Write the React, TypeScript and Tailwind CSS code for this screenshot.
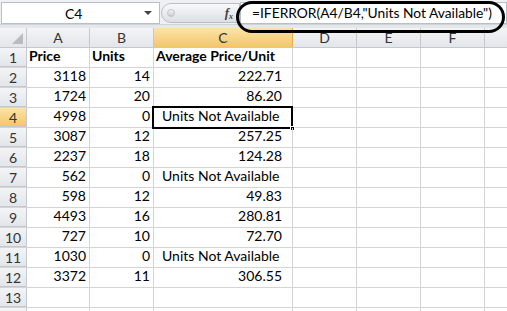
import React from "react";

type Row = { a: string; b: string; c: string; cText?: boolean };

const rows: Row[] = [
  { a: "3118", b: "14", c: "222.71" },
  { a: "1724", b: "20", c: "86.20" },
  { a: "4998", b: "0", c: "Units Not Available", cText: true },
  { a: "3087", b: "12", c: "257.25" },
  { a: "2237", b: "18", c: "124.28" },
  { a: "562", b: "0", c: "Units Not Available", cText: true },
  { a: "598", b: "12", c: "49.83" },
  { a: "4493", b: "16", c: "280.81" },
  { a: "727", b: "10", c: "72.70" },
  { a: "1030", b: "0", c: "Units Not Available", cText: true },
  { a: "3372", b: "11", c: "306.55" },
];

const cols = [
  { key: "A", w: "w-[63px]" },
  { key: "B", w: "w-[64px]" },
  { key: "C", w: "w-[139px]" },
  { key: "D", w: "w-[64px]" },
  { key: "E", w: "w-[64px]" },
  { key: "F", w: "w-[64px]" },
];

const cell = "h-full shrink-0 border-r border-[#d4d4d4] flex items-end pb-[1px] whitespace-nowrap text-[14px]";
const rowHead =
  "w-[27px] shrink-0 h-full flex items-center justify-center border-r border-b border-[#c5c9cf] text-[14px] text-[#333]";

function RowHeader({ n, active }: { n?: number; active?: boolean }) {
  return (
    <div
      className={`${rowHead} ${
        active ? "bg-gradient-to-b from-[#fbe3a8] to-[#f3c766]" : "bg-gradient-to-b from-[#f3f4f6] to-[#e3e6ea]"
      }`}
    >
      {n}
    </div>
  );
}

function EmptyRest() {
  return (
    <>
      <div className={`${cell} w-[64px]`} />
      <div className={`${cell} w-[64px]`} />
      <div className={`${cell} w-[64px]`} />
      <div className="h-full flex-1" />
    </>
  );
}

export default function App() {
  return (
    <div
      className="relative w-[507px] h-[311px] overflow-hidden bg-white text-black"
      style={{ fontFamily: "Lato, 'Liberation Sans', sans-serif" }}
    >
      {/* formula bar */}
      <div className="h-[24px] flex items-stretch bg-[#eef0f3] pt-[2px] pl-[1px]">
        <div className="w-[159px] bg-white border border-[#b9bec6] flex items-center relative">
          <span className="ml-[63px] text-[14px]">C4</span>
          <span className="absolute right-[7px] top-[8px] w-0 h-0 border-l-[4px] border-r-[4px] border-t-[4px] border-l-transparent border-r-transparent border-t-[#444]" />
        </div>
        <div className="w-[80px] flex items-center">
          <div className="ml-[1px] h-[20px] w-[79px] rounded-l-full border border-[#b9bec6] bg-gradient-to-b from-[#f8f9fa] to-[#dcdfe4] flex items-center">
            <span className="ml-[5px] w-[8px] h-[8px] rounded-full bg-gradient-to-b from-[#f5f5f5] to-[#c8ccd2] border border-[#c0c4ca]" />
            <span
              className="ml-auto mr-[6px] italic font-bold text-[13px] text-[#444]"
              style={{ fontFamily: "'Liberation Serif', serif" }}
            >
              f<sub className="text-[8px]">x</sub>
            </span>
          </div>
        </div>
        <div className="flex-1 bg-white border border-[#b9bec6] flex items-center">
          <span className="ml-[11px] text-[13.8px] whitespace-nowrap">=IFERROR(A4/B4,"Units Not Available")</span>
        </div>
      </div>
      <div className="h-[4px] bg-[#e4e7eb] border-t border-[#cfd3d8]" />

      {/* column headers */}
      <div className="h-[20px] flex border-b border-[#c5c9cf]">
        <div className="w-[27px] shrink-0 h-full border-r border-[#c5c9cf] bg-gradient-to-b from-[#f3f4f6] to-[#e3e6ea] relative">
          <span className="absolute right-[3px] bottom-[3px] w-0 h-0 border-l-[11px] border-l-transparent border-b-[11px] border-b-[#b8bcc2]" />
        </div>
        {cols.map((c) => (
          <div
            key={c.key}
            className={`${c.w} shrink-0 h-full border-r flex items-center justify-center text-[14px] text-[#333] ${
              c.key === "C"
                ? "border-[#e0b050] bg-gradient-to-b from-[#fbe3a8] to-[#f3c766]"
                : "border-[#c5c9cf] bg-gradient-to-b from-[#f3f4f6] to-[#e3e6ea]"
            }`}
          >
            {c.key}
          </div>
        ))}
        <div className="flex-1 h-full bg-gradient-to-b from-[#f3f4f6] to-[#e3e6ea]" />
      </div>

      {/* row 1 */}
      <div className="h-[20px] flex border-b border-[#d4d4d4]">
        <RowHeader n={1} />
        <div className={`${cell} w-[63px] pl-[2px] font-bold`}>Price</div>
        <div className={`${cell} w-[64px] pl-[2px] font-bold`}>Units</div>
        <div className={`${cell} w-[139px] pl-[2px] font-bold`}>Average Price/Unit</div>
        <EmptyRest />
      </div>

      {rows.map((r, i) => {
        const n = i + 2;
        const active = n === 4;
        return (
          <div key={n} className="h-[20px] flex border-b border-[#d4d4d4]">
            <RowHeader n={n} active={active} />
            <div className={`${cell} w-[63px] justify-end pr-[3px]`}>{r.a}</div>
            <div className={`${cell} w-[64px] justify-end pr-[3px]`}>{r.b}</div>
            <div className={`${cell} w-[139px] relative ${r.cText ? "pl-[8px]" : "justify-end pr-[10px]"}`}>
              {r.c}
              {active && (
                <>
                  <span className="absolute -left-[2px] -top-[2px] -right-[1px] -bottom-[2px] border-2 border-black" />
                  <span className="absolute -right-[3px] -bottom-[4px] w-[5px] h-[5px] bg-black border border-white" />
                </>
              )}
            </div>
            <EmptyRest />
          </div>
        );
      })}

      {/* rows 13, 14 */}
      {[13, 14].map((n) => (
        <div key={n} className="h-[20px] flex border-b border-[#d4d4d4]">
          <RowHeader n={n === 13 ? 13 : undefined} />
          <div className={`${cell} w-[63px]`} />
          <div className={`${cell} w-[64px]`} />
          <div className={`${cell} w-[139px]`} />
          <EmptyRest />
        </div>
      ))}

      {/* hand drawn marker around the formula */}
      <div className="absolute left-[236px] top-[1px] w-[269px] h-[32px] border-[3px] border-black rounded-[16px] pointer-events-none" />
    </div>
  );
}
